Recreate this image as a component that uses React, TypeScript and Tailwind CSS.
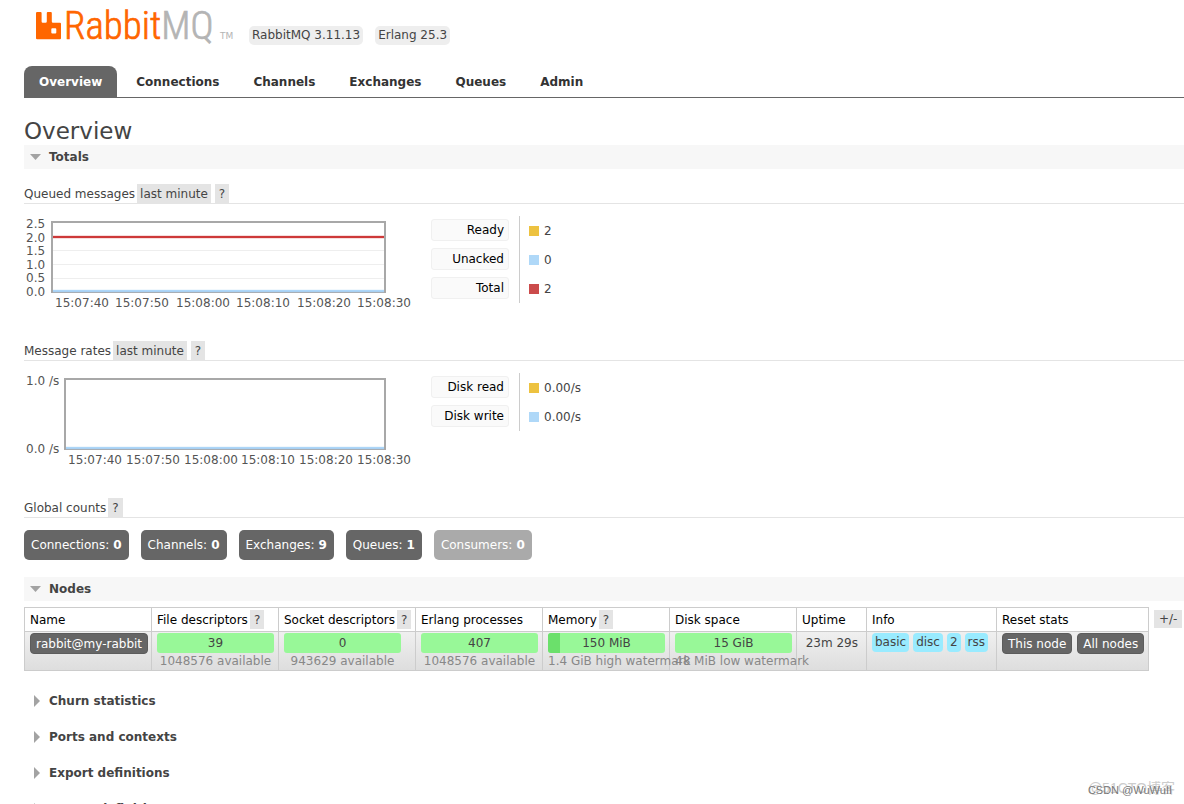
import { ReactNode } from 'react';

const TABS = ['Overview', 'Connections', 'Channels', 'Exchanges', 'Queues', 'Admin'];

const COUNTS = [
  { label: 'Connections', value: 0 },
  { label: 'Channels', value: 0 },
  { label: 'Exchanges', value: 9 },
  { label: 'Queues', value: 1 },
  { label: 'Consumers', value: 0, disabled: true },
];

const COLUMNS = [
  { title: 'Name', width: 'w-[127px]' },
  { title: 'File descriptors', width: 'w-[127px]', help: true },
  { title: 'Socket descriptors', width: 'w-[137px]', help: true },
  { title: 'Erlang processes', width: 'w-[127px]' },
  { title: 'Memory', width: 'w-[127px]', help: true },
  { title: 'Disk space', width: 'w-[127px]' },
  { title: 'Uptime', width: 'w-[70px]' },
  { title: 'Info', width: 'w-[130px]' },
  { title: 'Reset stats', width: 'w-[152px]' },
];

const METERS = [
  { value: '39', note: '1048576 available', used: 0 },
  { value: '0', note: '943629 available', used: 0 },
  { value: '407', note: '1048576 available', used: 0 },
  { value: '150 MiB', note: '1.4 GiB high watermark', used: 10 },
  { value: '15 GiB', note: '48 MiB low watermark', used: 0 },
];

const TIMES = ['15:07:40', '15:07:50', '15:08:00', '15:08:10', '15:08:20', '15:08:30'];

const COLLAPSED = ['Churn statistics', 'Ports and contexts', 'Export definitions', 'Import definitions'];

function Logo() {
  return (
    <a href="#/" className="flex h-[54px] w-[201px]" aria-label="RabbitMQ">
      <svg viewBox="0 0 201 54" className="h-[54px] w-[201px]">
        <path
          fill="#ff6600"
          fillRule="evenodd"
          d="M1.2 12H4.6Q5.6 12 5.6 13V21.6Q5.6 22.8 6.8 22.8H9.6Q10.8 22.8 10.8 21.6V13Q10.8 12 11.8 12H14.8Q15.8 12 15.8 13V21.6Q15.8 22.8 17 22.8H24Q25 22.8 25 23.8V38.2Q25 39.2 24 39.2H1.2Q0 39.2 0 38.2V13Q0 12 1.2 12ZM16.3 28.3Q15.3 28.3 15.3 29.3V32.6Q15.3 33.6 16.3 33.6H19.3Q20.3 33.6 20.3 32.6V29.3Q20.3 28.3 19.3 28.3Z"
        />
        <text
          x="28"
          y="39"
          fontSize="39"
          fontWeight="300"
          fontFamily="'Liberation Sans Narrow', 'Roboto Condensed', Roboto, sans-serif"
          fill="#ff6600"
          stroke="#ff6600"
          strokeWidth="0.7"
        >
          Rabbit
          <tspan fill="#b4b4b4" stroke="#b4b4b4">
            MQ
          </tspan>
        </text>
        <text x="184" y="39" fontSize="9" fill="#b4b4b4">
          TM
        </text>
      </svg>
    </a>
  );
}

function Help() {
  return (
    <button type="button" className="h-[19px] bg-[#e4e4e4] px-1 text-[#444]">
      ?
    </button>
  );
}

function SectionHeader({ title, open = false }: { title: string; open?: boolean }) {
  return (
    <h2 className={open ? 'bg-[#f7f7f7] font-bold' : 'font-bold'}>
      <button type="button" aria-expanded={open} className="flex h-6 w-full items-center gap-2 pl-[6px]">
        <svg viewBox="0 0 11 12" className="h-3 w-[11px]" fill="#a3a3a3">
          {open ? <path d="M0 3h11L5.5 9z" /> : <path d="M4 0v12l6-6z" />}
        </svg>
        {title}
      </button>
    </h2>
  );
}

function SubHeader({ title, range }: { title: string; range?: string }) {
  return (
    <h3 className="flex h-5 items-center gap-[2px] border-b border-[#e4e4e4]">
      {title}
      {range && (
        <button type="button" className="mr-[2px] h-[19px] bg-[#e4e4e4] px-[3px]">
          {range}
        </button>
      )}
      <Help />
    </h3>
  );
}

type ChartProps = {
  left: number;
  yLabels: string[];
  lines: { color: string; y: number }[];
};

function Chart({ left, yLabels, lines }: ChartProps) {
  const step = 68 / (yLabels.length - 1);
  const xStep = (330 - left) / (TIMES.length - 1);
  return (
    <svg viewBox="0 0 392 105" className="h-[105px] w-[392px] shrink-0" fontSize="12" fill="#545454">
      {yLabels.slice(1, -1).map((label, i) => (
        <path key={label} d={`M${left} ${Math.round(6 + (i + 1) * 14)}.5H361`} stroke="#eeeeee" />
      ))}
      <rect x={left} y="6" width={361 - left} height="70" fill="none" stroke="#a8a8a8" strokeWidth="2" />
      {lines.map((line) => (
        <g key={line.color} stroke={line.color}>
          <path d={`M${left + 1} ${line.y}H360`} strokeWidth="3" opacity="0.3" />
          <path d={`M${left + 1} ${line.y}H360`} strokeWidth="2" opacity="0.9" />
        </g>
      ))}
      {yLabels.map((label, i) => (
        <text key={label} x="2" y={Math.round(12 + i * step)}>
          {label}
        </text>
      ))}
      {TIMES.map((time, i) => (
        <text key={time} x={Math.round(left + 30 + i * xStep)} y="91" textAnchor="middle">
          {time}
        </text>
      ))}
    </svg>
  );
}

function Legend({ items }: { items: { label: string; color: string; value: string }[] }) {
  return (
    <table className="mb-auto border-collapse">
      <tbody>
        {items.map((item) => (
          <tr key={item.label} className="h-[29px]">
            <th className="border-r border-[#ccc] p-0 pr-[10px] pb-[2px] font-normal">
              <button
                type="button"
                className="flex h-[22px] w-[78px] items-center justify-end rounded-[3px] border border-[#f0f0f0] bg-[#fafafa] pr-1 text-black"
              >
                {item.label}
              </button>
            </th>
            <td className="p-0 pl-[9px]">
              <span className="flex items-center gap-[5px]">
                <svg viewBox="0 0 10 10" className="h-[10px] w-[10px]">
                  <rect width="10" height="10" fill={item.color} />
                </svg>
                {item.value}
              </span>
            </td>
          </tr>
        ))}
      </tbody>
    </table>
  );
}

function Meter({ value, note, used }: { value: string; note: string; used: number }) {
  return (
    <div className="w-[117px]">
      <div className="relative h-5 overflow-hidden rounded-[3px] bg-[#98f898] text-center leading-5">
        <div className="absolute inset-y-0 left-0 bg-[#6be06b]" style={{ width: `${used}%` }} />
        <span className="relative">{value}</span>
      </div>
      <div className="flex h-4 min-w-full justify-center-safe text-[#888] leading-4 whitespace-nowrap">{note}</div>
    </div>
  );
}

function DarkButton({ children }: { children: ReactNode }) {
  return (
    <button type="button" className="h-[21px] rounded-[4px] border border-[#5c5c5c] bg-[#666] px-[5px] leading-[18px] whitespace-nowrap text-white">
      {children}
    </button>
  );
}

function NodesTable() {
  return (
    <table className="shrink-0 table-fixed border-collapse">
      <thead>
        <tr className="h-6">
          {COLUMNS.map((col) => (
            <th key={col.title} className={`${col.width} border border-[#ccc] p-0 pl-[5px] text-left font-normal text-black`}>
              <span className="flex items-center gap-[2px] whitespace-nowrap">
                {col.title}
                {col.help && <Help />}
              </span>
            </th>
          ))}
        </tr>
      </thead>
      <tbody>
        <tr className="h-[39px] bg-linear-to-b from-[#f0f0f0] to-[#dddddd] align-top">
          <td className="border border-[#ccc] p-0 pt-px pl-[5px]">
            <DarkButton>rabbit@my-rabbit</DarkButton>
          </td>
          {METERS.map((m, i) => (
            <td key={i} className="border border-[#ccc] p-0 pt-px pl-[5px]">
              <Meter {...m} />
            </td>
          ))}
          <td className="border border-[#ccc] p-0 pt-px pr-2 text-right leading-5 whitespace-nowrap">23m 29s</td>
          <td className="border border-[#ccc] p-0 pt-px pl-[5px]">
            <span className="flex gap-1">
              {['basic', 'disc', '2', 'rss'].map((tag) => (
                <abbr key={tag} className="h-[19px] rounded-[4px] bg-[#99ebff] px-[3px] leading-[19px] no-underline">
                  {tag}
                </abbr>
              ))}
            </span>
          </td>
          <td className="border border-[#ccc] p-0 pt-px pl-[5px]">
            <span className="flex gap-[5px]">
              <DarkButton>This node</DarkButton>
              <DarkButton>All nodes</DarkButton>
            </span>
          </td>
        </tr>
      </tbody>
    </table>
  );
}

export default function App() {
  return (
    <div className="relative h-screen overflow-hidden bg-white pl-6 font-['DejaVu_Sans',Verdana,sans-serif] text-[12px] leading-4 text-[#444]">
      <header className="flex h-[66px] items-start gap-3 pl-3">
        <Logo />
        <span className="mt-[26px] h-[19px] rounded-[5px] bg-[#eee] px-[3px] leading-[19px]">RabbitMQ 3.11.13</span>
        <span className="mt-[26px] h-[19px] rounded-[5px] bg-[#eee] px-[3px] leading-[19px]">Erlang 25.3</span>
      </header>

      <nav className="flex h-8 gap-1 border-b border-[#666] font-bold">
        {TABS.map((tab, i) => (
          <a
            key={tab}
            href={`#/${tab.toLowerCase()}`}
            className={`flex items-center rounded-t-lg px-[15px] ${i === 0 ? 'bg-[#666] text-white' : 'text-[#333]'}`}
          >
            {tab}
          </a>
        ))}
      </nav>

      <main>
        <h1 className="pt-5 text-[23px] leading-[27px]">Overview</h1>

        <SectionHeader title="Totals" open />
        <div className="pt-[15px]">
          <SubHeader title="Queued messages" range="last minute" />
          <div className="mb-5 flex gap-[15px] pt-3">
            <Chart
              left={28}
              yLabels={['2.5', '2.0', '1.5', '1.0', '0.5', '0.0']}
              lines={[
                { color: '#a8d4f8', y: 75 },
                { color: '#cb2b2b', y: 21 },
              ]}
            />
            <Legend
              items={[
                { label: 'Ready', color: '#edc240', value: '2' },
                { label: 'Unacked', color: '#afd8f8', value: '0' },
                { label: 'Total', color: '#cb4b4b', value: '2' },
              ]}
            />
          </div>

          <SubHeader title="Message rates" range="last minute" />
          <div className="mb-5 flex gap-[15px] pt-3">
            <Chart left={41} yLabels={['1.0 /s', '0.0 /s']} lines={[{ color: '#a8d4f8', y: 75 }]} />
            <Legend
              items={[
                { label: 'Disk read', color: '#edc240', value: '0.00/s' },
                { label: 'Disk write', color: '#afd8f8', value: '0.00/s' },
              ]}
            />
          </div>

          <SubHeader title="Global counts" />
          <div className="mb-[17px] flex gap-3 pt-3">
            {COUNTS.map((c) => (
              <a
                key={c.label}
                href={`#/${c.label.toLowerCase()}`}
                className={`flex h-[30px] items-center gap-1 rounded-[5px] px-[7px] text-white ${c.disabled ? 'bg-[#aaa]' : 'bg-[#666]'}`}
              >
                {c.label}: <strong>{c.value}</strong>
              </a>
            ))}
          </div>
        </div>

        <SectionHeader title="Nodes" open />
        <div className="mb-[18px] flex items-start gap-[5px] pt-[6px]">
          <NodesTable />
          <button type="button" className="mt-[3px] h-[18px] shrink-0 bg-[#e4e4e4] px-[5px]">
            +/-
          </button>
        </div>

        <div className="flex flex-col gap-3">
          {COLLAPSED.map((title) => (
            <SectionHeader key={title} title={title} />
          ))}
        </div>
      </main>

      <div className="absolute right-[9px] bottom-2 font-['Liberation_Sans','Noto_Sans_CJK_SC',sans-serif] text-[14px] text-[#ccc]">@51CTO博客</div>
      <div className="absolute right-3 bottom-[6px] font-['Liberation_Sans',sans-serif] text-[11px] text-[#777]">CSDN @WuWuII</div>
    </div>
  );
}
